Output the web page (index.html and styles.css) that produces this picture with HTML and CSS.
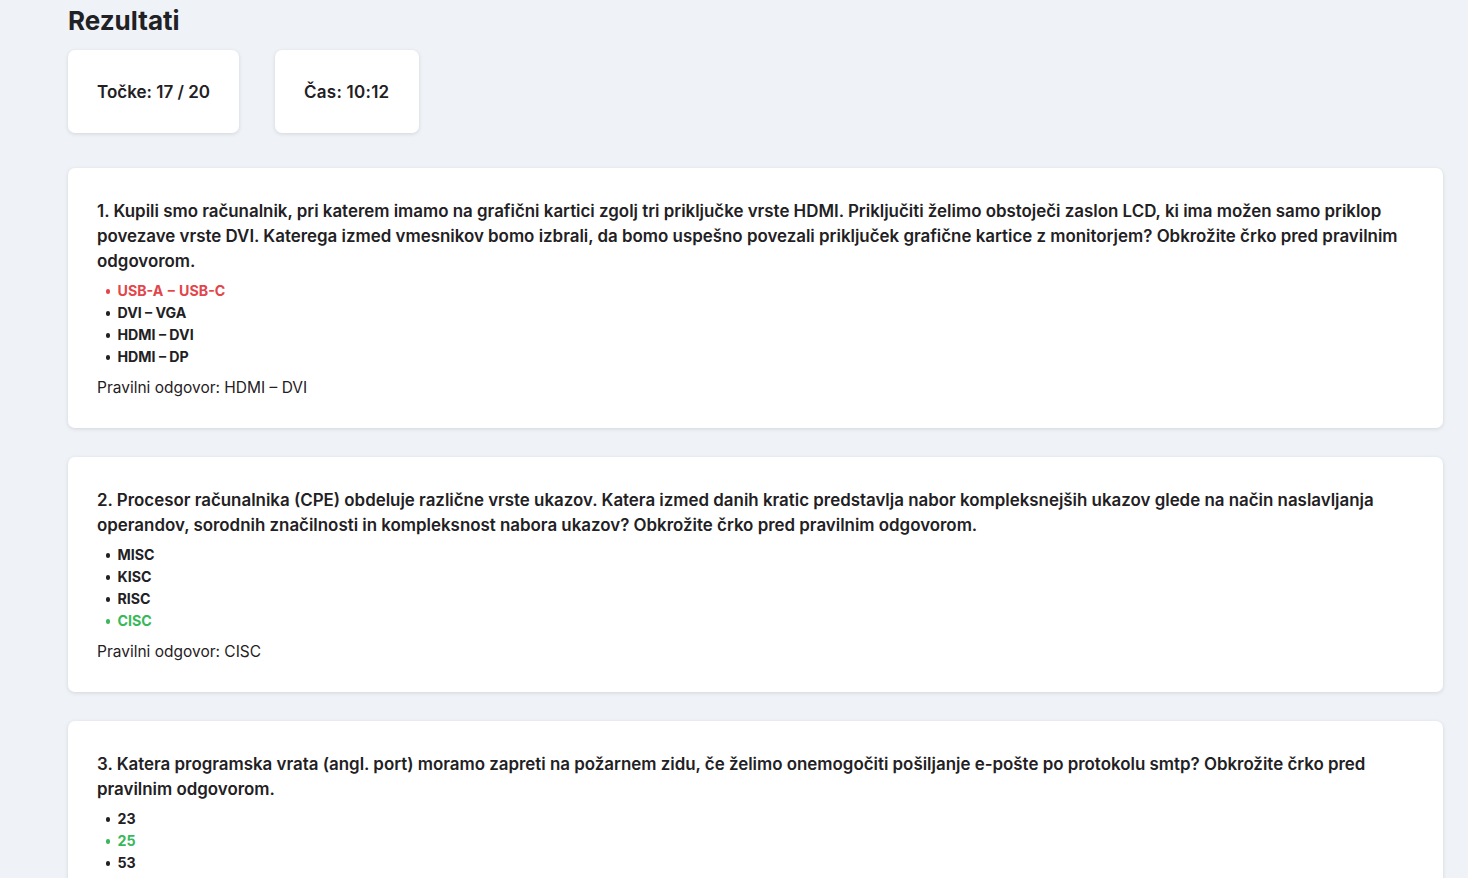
FILE: index.html
```html
<!DOCTYPE html>
<html lang="sl">
<head>
<meta charset="utf-8">
<title>Rezultati</title>
<link rel="stylesheet" href="styles.css">
</head>
<body>
<main class="page">
  <h1 class="title">Rezultati</h1>
  <div class="stats">
    <div class="stat">Točke: 17 / 20</div>
    <div class="stat">Čas: 10:12</div>
  </div>
  <div class="questions">
    <section class="card">
      <p class="question">1. Kupili smo računalnik, pri katerem imamo na grafični kartici zgolj tri priključke vrste HDMI. Priključiti želimo obstoječi zaslon LCD, ki ima možen samo priklop povezave vrste DVI. Katerega izmed vmesnikov bomo izbrali, da bomo uspešno povezali priključek grafične kartice z monitorjem? Obkrožite črko pred pravilnim odgovorom.</p>
      <ul class="options">
        <li class="wrong">USB-A – USB-C</li>
        <li>DVI – VGA</li>
        <li>HDMI – DVI</li>
        <li>HDMI – DP</li>
      </ul>
      <p class="answer">Pravilni odgovor: HDMI – DVI</p>
    </section>
    <section class="card">
      <p class="question">2. Procesor računalnika (CPE) obdeluje različne vrste ukazov. Katera izmed danih kratic predstavlja nabor kompleksnejših ukazov glede na način naslavljanja operandov, sorodnih značilnosti in kompleksnost nabora ukazov? Obkrožite črko pred pravilnim odgovorom.</p>
      <ul class="options">
        <li>MISC</li>
        <li>KISC</li>
        <li>RISC</li>
        <li class="right">CISC</li>
      </ul>
      <p class="answer">Pravilni odgovor: CISC</p>
    </section>
    <section class="card">
      <p class="question">3. Katera programska vrata (angl. port) moramo zapreti na požarnem zidu, če želimo onemogočiti pošiljanje e-pošte po protokolu smtp? Obkrožite črko pred pravilnim odgovorom.</p>
      <ul class="options">
        <li>23</li>
        <li class="right">25</li>
        <li>53</li>
      </ul>
      <p class="answer">Pravilni odgovor: 25</p>
    </section>
  </div>
</main>
</body>
</html>
```
FILE: styles.css
```css
html, body {
  margin: 0;
  padding: 0;
}
body {
  background: #eff2f7;
  font-family: Inter, "Noto Sans", "Liberation Sans", sans-serif;
  color: #1f2124;
}
.page {
  padding: 4px 25px 40px 68px;
}
.title {
  margin: 0;
  font-size: 26px;
  line-height: 34px;
  font-weight: 700;
}
.stats {
  display: flex;
  gap: 36px;
  margin-top: 12px;
}
.stat {
  background: #fff;
  border-radius: 7px;
  box-shadow: 0 1px 4px rgba(0, 0, 0, 0.12);
  padding: 31px 29px 30px;
  font-size: 17px;
  line-height: 22px;
  font-weight: 600;
}
.stat + .stat {
  padding: 31px 30px 30px 29px;
  letter-spacing: 0.25px;
}
.questions {
  display: flex;
  flex-direction: column;
  gap: 29px;
  margin-top: 35px;
}
.card {
  background: #fff;
  border-radius: 7px;
  box-shadow: 0 1px 4px rgba(0, 0, 0, 0.12);
  padding: 31px 29px 29px;
}
.question {
  margin: 0;
  font-size: 16.9px;
  line-height: 25px;
  font-weight: 600;
}
.options {
  margin: 6px 0 0;
  padding-left: 8px;
  list-style: none;
  font-size: 14.2px;
  line-height: 22px;
  font-weight: 700;
}
.options li {
  display: flex;
  align-items: center;
}
.options li::before {
  content: "";
  width: 4.5px;
  height: 4.5px;
  border-radius: 50%;
  background: currentColor;
  margin: 1px 7.5px 0 0.5px;
  flex: none;
}
.wrong {
  color: #e2454a;
  word-spacing: 1px;
}
.right {
  color: #37b85a;
}
.answer {
  margin: 9px 0 0;
  font-size: 15.5px;
  line-height: 22px;
  font-weight: 400;
}
```
